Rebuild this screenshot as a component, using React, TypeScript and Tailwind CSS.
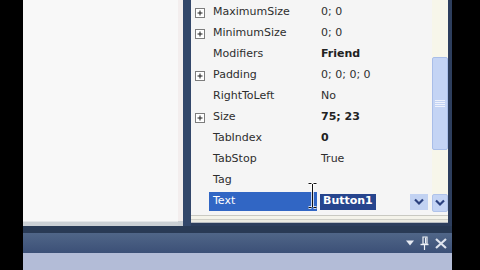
import React from "react";

type Row = { name: string; value: string; plus?: boolean; bold?: boolean; selected?: boolean };

const rows: Row[] = [
  { name: "MaximumSize", value: "0; 0", plus: true },
  { name: "MinimumSize", value: "0; 0", plus: true },
  { name: "Modifiers", value: "Friend", bold: true },
  { name: "Padding", value: "0; 0; 0; 0", plus: true },
  { name: "RightToLeft", value: "No" },
  { name: "Size", value: "75; 23", plus: true, bold: true },
  { name: "TabIndex", value: "0", bold: true },
  { name: "TabStop", value: "True" },
  { name: "Tag", value: "" },
  { name: "Text", value: "Button1", selected: true },
];

function PlusBox() {
  return (
    <svg width="10" height="10" viewBox="0 0 10 10">
      <rect x="0.5" y="0.5" width="9" height="9" fill="#ffffff" stroke="#7d7d7d" />
      <path d="M2.5 5H7.5M5 2.5V7.5" stroke="#1c1c1c" strokeWidth="1" />
    </svg>
  );
}

function Chevron() {
  return (
    <svg width="12" height="8" viewBox="0 0 12 8">
      <path d="M2 1.5L6 5.5L10 1.5" fill="none" stroke="#2c4280" strokeWidth="2.2" />
    </svg>
  );
}

export default function App() {
  return (
    <div className="w-[480px] h-[270px] flex bg-black overflow-hidden font-['DejaVu_Sans',sans-serif] text-[11px]">
      <div className="w-[23px] shrink-0 bg-black" />
      <div className="w-[429px] shrink-0 flex flex-col">
        <div className="h-[226px] flex">
          {/* left designer panel */}
          <div className="w-[155px] flex flex-col bg-[#f8f8f8]">
            <div className="flex-1" />
            <div className="h-[1px] bg-[#e4e6e8]" />
            <div className="h-[4px] bg-[#cbd0d5]" />
          </div>
          <div className="w-[5px] flex flex-col bg-[#f3eeee]">
            <div className="flex-1" />
            <div className="h-[5px] bg-[#c9ced3]" />
          </div>
          <div className="w-[8px] bg-[#33476a]" />
          {/* property grid */}
          <div className="w-[257px] flex flex-col bg-[#f5f5f5]">
            <div className="h-[212px] flex">
              <div className="relative w-[241px] flex flex-col pt-[2px]">
                {rows.map((r) => (
                  <div key={r.name} className="h-[21px] flex items-center">
                    <div className="w-[18px] h-full flex items-center justify-center">
                      {r.plus ? <PlusBox /> : null}
                    </div>
                    <div
                      className={
                        r.selected
                          ? "w-[108px] h-[19px] flex items-center pl-[4px] bg-[#3166c4] text-white"
                          : "w-[108px] h-full flex items-center pl-[4px] text-[#2e2e2e]"
                      }
                    >
                      {r.name}
                    </div>
                    <div className="flex-1 h-full flex items-center pl-[3px] pr-[4px]">
                      {r.selected ? (
                        <>
                          <span className="h-[16px] flex items-center px-[3px] bg-[#26458e] text-white font-bold">
                            {r.value}
                          </span>
                          <div className="flex-1" />
                          <div className="w-[18px] h-[16px] flex items-center justify-center bg-[#c2d2f2]">
                            <Chevron />
                          </div>
                        </>
                      ) : (
                        <span className={r.bold ? "pl-[1px] font-bold text-[#222]" : "pl-[1px] text-[#2e2e2e]"}>
                          {r.value}
                        </span>
                      )}
                    </div>
                  </div>
                ))}
                {/* I-beam mouse cursor */}
                <svg className="absolute left-[117px] top-[182px]" width="9" height="27" viewBox="0 0 9 27">
                  <path d="M0.5 1.5H3.5M5.5 1.5H8.5M4.5 2V25M0.5 25.5H3.5M5.5 25.5H8.5" stroke="#ffffff" strokeWidth="2.5" />
                  <path d="M0.5 1.5H3.5M5.5 1.5H8.5M4.5 2V25M0.5 25.5H3.5M5.5 25.5H8.5" stroke="#111" strokeWidth="1" />
                </svg>
              </div>
              {/* scrollbar */}
              <div className="w-[16px] flex flex-col bg-[#f7f6ea]">
                <div className="h-[57px]" />
                <div className="h-[93px] flex flex-col items-stretch justify-center bg-[#c4d4f4] border border-[#a9bee8] rounded-[2px] gap-[1px] px-[2px]">
                  <div className="h-[1px] bg-[#eef2fc]" />
                  <div className="h-[1px] bg-[#eef2fc]" />
                  <div className="h-[1px] bg-[#eef2fc]" />
                  <div className="h-[1px] bg-[#eef2fc]" />
                </div>
                <div className="flex-1" />
                <div className="h-[18px] flex items-center justify-center bg-[#c4d4f4] border border-[#b0c3ea] rounded-[2px]">
                  <Chevron />
                </div>
              </div>
            </div>
            {/* bottom edge lines */}
            <div className="flex-1 flex flex-col">
              <div className="h-[3px]" />
              <div className="h-[1px] bg-[#c9c9c2]" />
              <div className="h-[3px] bg-[#f4f3ea]" />
              <div className="h-[1px] bg-[#d0d0c8]" />
              <div className="h-[2px] bg-[#ecebe2]" />
              <div className="h-[1px] bg-[#b8bcc2]" />
              <div className="flex-1 bg-[#2d3e5d]" />
            </div>
          </div>
          <div className="w-[4px] bg-[#2d3e5d]" />
        </div>
        <div className="h-[7px] bg-[#293a55]" />
        <div className="h-[20px] flex items-center justify-end gap-[6px] pr-[5px] bg-gradient-to-b from-[#506688] to-[#3c5077]">
          <svg width="8" height="6" viewBox="0 0 8 6">
            <path d="M0 0.5H8L4 5.5Z" fill="#e6eaf2" />
          </svg>
          <svg width="9" height="14" viewBox="0 0 9 14">
            <path d="M3 1H7V8H3Z" fill="none" stroke="#eef1f6" strokeWidth="1.2" />
            <path d="M5.5 1.5V7.5" stroke="#eef1f6" strokeWidth="1" />
            <path d="M0.5 8.5H8.5" stroke="#eef1f6" strokeWidth="1.4" />
            <path d="M4.5 9V14" stroke="#eef1f6" strokeWidth="1.2" />
          </svg>
          <svg width="12" height="11" viewBox="0 0 12 11">
            <path d="M1 1L11 10M11 1L1 10" stroke="#dfe4ee" strokeWidth="2.2" />
          </svg>
        </div>
        <div className="flex-1 bg-[#b3bcd7]" />
      </div>
      <div className="flex-1 bg-black" />
    </div>
  );
}
